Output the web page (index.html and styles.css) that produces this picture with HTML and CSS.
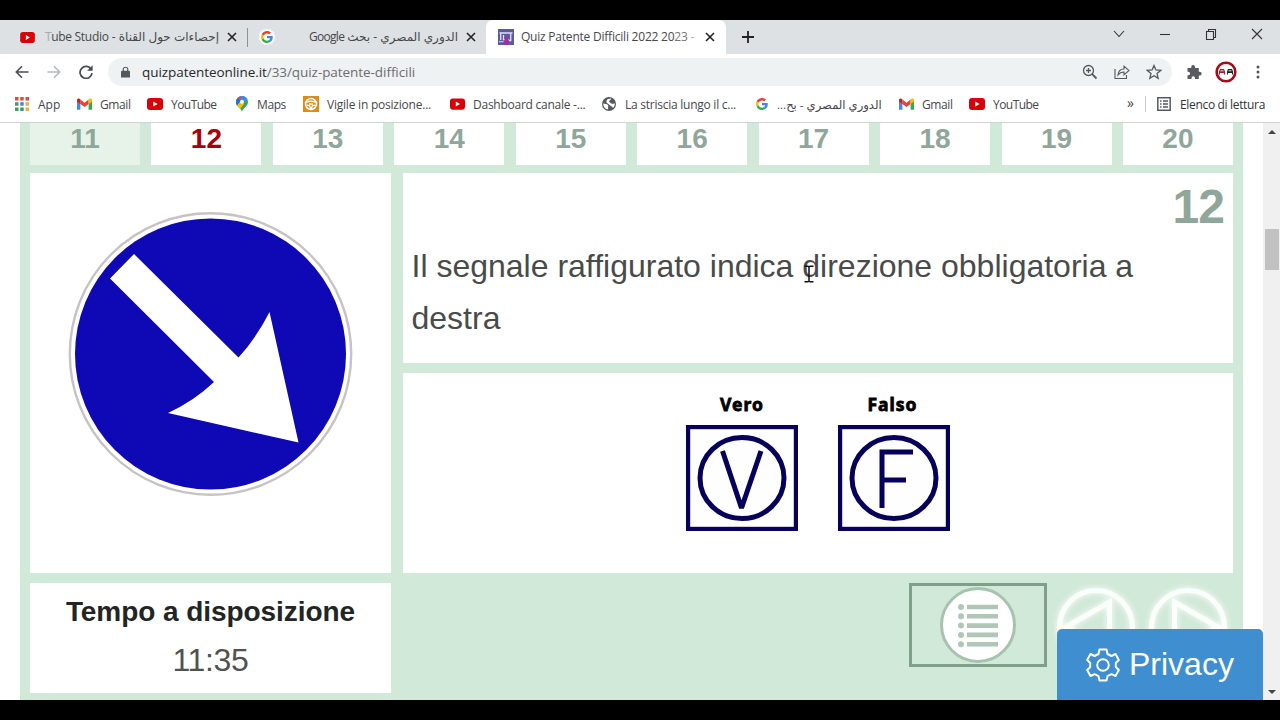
FILE: index.html
```html
<!DOCTYPE html>
<html lang="it">
<head>
<meta charset="utf-8">
<title>Quiz Patente Difficili 2022 2023</title>
<link rel="stylesheet" href="styles.css">
</head>
<body>
<svg class="defs" aria-hidden="true">
  <symbol id="yt" viewBox="0 0 16 12"><rect width="16" height="12" rx="3" fill="#d90008"/><path d="M6.2 3.4v5.2L10.6 6z" fill="#fff"/></symbol>
  <symbol id="google" viewBox="0 0 48 48"><path fill="#EA4335" d="M24 9.5c3.5 0 6.700 1.200 9.200 3.600l6.900-6.900C35.900 2.400 30.500 0 24 0 14.600 0 6.500 5.400 2.600 13.200l8 6.200C12.400 13.700 17.700 9.500 24 9.500z"/><path fill="#4285F4" d="M47 24.500c0-1.600-.2-3.100-.4-4.500H24v9h12.900c-.6 3-2.200 5.500-4.800 7.200l7.700 6C44.400 38 47 31.800 47 24.500z"/><path fill="#FBBC05" d="M10.500 28.600c-.5-1.500-.8-3-.8-4.600s.3-3.100.8-4.600l-8-6.200C1 16.500 0 20.100 0 24s.9 7.500 2.600 10.800z"/><path fill="#34A853" d="M24 48c6.500 0 11.900-2.100 15.900-5.800l-7.700-6c-2.200 1.500-4.900 2.300-8.200 2.300-6.300 0-11.600-4.200-13.500-9.900l-8 6.200C6.500 42.600 14.600 48 24 48z"/></symbol>
  <symbol id="gmail" viewBox="0 0 16 12"><path fill="#4285f4" d="M0 1.500V12h3.600V5z"/><path fill="#34a853" d="M16 1.500V12h-3.600V5z"/><path fill="#ea4335" d="M3.600 1.200 8 4.600l4.400-3.400v4.800L8 9.300 3.600 6z"/><path fill="#c5221f" d="M0 2.200C0 0 2.200-.4 3.600.9V6L0 3.400z"/><path fill="#fbbc04" d="M16 2.200c0-2.200-2.200-2.600-3.600-1.300V6L16 3.400z"/></symbol>
  <symbol id="x" viewBox="0 0 10 10"><path d="M1 1l8 8M9 1L1 9" stroke="#222" stroke-width="1.600"/></symbol>
</svg>
<div class="screen">
  <header class="browser">
    <div class="tabstrip">
      <div class="tab tab-one"><svg class="ic-yt"><use href="#yt"/></svg><span class="tab-title rtl t1" dir="rtl">إحصاءات حول القناة - <span class="latin"><span class="fade-start">T</span>ube Studio</span></span><svg class="ic-x"><use href="#x"/></svg></div>
      <div class="tab tab-two"><span class="g-disc"><svg class="ic-g"><use href="#google"/></svg></span><span class="tab-title rtl t2" dir="rtl">الدوري المصري - بحث <span class="latin">Google</span></span><svg class="ic-x"><use href="#x"/></svg></div>
      <div class="tab tab-active"><svg class="ic-quiz" viewBox="0 0 16 16"><path fill="#5c5a9c" d="M0 0h16v16H0z"/><path d="M1.500 4h13" stroke="#d7d8f1" stroke-width="1.600"/><path d="M2.700 4v7M12.700 4v7.500H11" stroke="#d7d8f1" stroke-width="1.400" fill="none"/><path d="M5.500 6v4.700h5" fill="none" stroke="#e6e5fa" stroke-width="1.300"/><path fill="#b3249b" d="M6.500 8.500h3.500V16H6.500z"/><path d="M1 12.700h4.500" stroke="#d9d9ef"/></svg><span class="tab-title t3">Quiz Patente Difficili 2022 20<span class="fade-a">23</span> <span class="fade-b">-</span></span><svg class="ic-x"><use href="#x"/></svg></div>
      <svg class="ic-plus" viewBox="0 0 12 12"><path d="M6 0v12M0 6h12" stroke="#222" stroke-width="1.800"/></svg>
      <div class="win-buttons">
        <svg width="12" height="12" viewBox="0 0 12 12"><path d="M1 3l5 5.500L11 3"/></svg>
        <svg width="12" height="12" viewBox="0 0 12 12"><path d="M1 6.500h10"/></svg>
        <svg width="12" height="12" viewBox="0 0 12 12"><path d="M1.500 3.500h7v8h-7zM3.500 3V1.500h7v8H9"/></svg>
        <svg width="12" height="12" viewBox="0 0 12 12"><path d="M1 1l10 10M11 1L1 11"/></svg>
      </div>
    </div>
    <div class="toolbar">
      <svg class="nav" viewBox="0 0 14 14"><path d="M13.500 7H1.500M7 1.300L1.300 7 7 12.700" stroke="#494c50"/></svg>
      <svg class="nav" viewBox="0 0 14 14"><path d="M.5 7h12M7 1.300L12.700 7 7 12.700" stroke="#b7babd"/></svg>
      <svg class="nav" viewBox="0 0 14 14"><path d="M12.300 4.500A6 6 0 1 0 13 8.200" stroke="#494c50" stroke-width="1.700"/><path d="M13.600.3v5.500H8.100z" fill="#494c50"/></svg>
      <div class="omnibox">
        <svg class="lock" viewBox="0 0 10 12"><path d="M1.200 4.500h7.600A1.200 1.200 0 0 1 10 5.700V12H0V5.700a1.200 1.200 0 0 1 1.200-1.200z" fill="#54585c"/><path d="M2.500 5V3a2.500 2.300 0 0 1 5 0v2" fill="none" stroke="#54585c" stroke-width="1.300"/></svg>
        <span class="url">quizpatenteonline.it<span class="path">/33/quiz-patente-difficili</span></span>
        <svg class="act" viewBox="0 0 16 16"><circle cx="6.500" cy="6.500" r="5"/><path d="M10.200 10.200l4.300 4.300" stroke-width="1.800"/><path d="M4 6.500h5M6.500 4v5"/></svg>
        <svg class="act" viewBox="0 0 16 16"><path d="M1 5v9.500h11.500V11M4 11c.4-4 2.600-6 6-6V2.200L15 6.500l-5 4.300V8C7.500 8 5.500 9 4 11z" stroke-width="1.100"/></svg>
        <svg class="act" viewBox="0 0 16 16"><path d="M8 1.500l1.900 4.500 4.800.4L11 9.600l1.200 4.700L8 11.800l-4.200 2.500L5 9.600 1.300 6.400 6.100 6z"/></svg>
      </div>
      <svg class="puzzle" viewBox="0 0 16 16"><path d="M1.500 4h3.700V3a1.900 1.900 0 0 1 3.800 0v1h3.800v3.800h.9a1.900 1.900 0 0 1 0 3.800h-.9V15H9v-1a1.700 1.700 0 0 0-3.500 0v1h-4v-3.700h.8a1.800 1.800 0 0 0 0-3.600h-.8z" fill="#575b5f"/></svg>
      <svg class="avatar" viewBox="0 0 22 22"><circle cx="11" cy="11" r="9.300" fill="#fff" stroke="#a60b16" stroke-width="2.600"/><path d="M4 10.500L5 8h4l1 2.500v3H9V12H5v1.500H4z" fill="#b31b2d"/><path d="M12 10.500l1-2.500h4l1 2.500v3h-1V12h-4v1.500h-1z" fill="#222"/><path d="M5.500 9.800h3M13.500 9.800h3" stroke="#ddd"/></svg>
      <svg class="dots" viewBox="0 0 4 14"><g fill="#54585c"><circle cx="2" cy="2" r="1.500"/><circle cx="2" cy="7" r="1.500"/><circle cx="2" cy="12" r="1.500"/></g></svg>
    </div>
    <nav class="bookmarks">
      <div class="bm b1"><svg width="14" height="14" viewBox="0 0 14 14"><path fill="#d94b45" d="M0 0h3.500v3.500H0zM5.200 0h3.500v3.500H5.200zM10.500 0H14v3.500h-3.500z"/><path fill="#479b63" d="M0 5.200h3.500v3.500H0zM0 10.500h3.500V14H0z"/><path fill="#4485dd" d="M5.200 5.200h3.500v3.500H5.200z"/><path fill="#e6b43c" d="M10.500 5.200H14v3.500h-3.500zM10.500 10.500H14V14h-3.500z"/><path fill="#39986d" d="M5.200 10.500h3.500V14H5.200z"/></svg><span>App</span></div>
      <div class="bm b2"><svg width="15" height="12"><use href="#gmail"/></svg><span>Gmail</span></div>
      <div class="bm b3"><svg width="16" height="12"><use href="#yt"/></svg><span>YouTube</span></div>
      <div class="bm b4"><svg width="12" height="16" viewBox="0 0 12 16"><path fill="#34a853" d="M6 16C5.400 12 0 10.500 0 6a6 6 0 0 1 12 0c0 4.500-5.400 6-6 10z"/><path fill="#ea4335" d="M6 6L1.500 2A6 6 0 0 1 6 0z"/><path fill="#4285f4" d="M5 0a6 6 0 0 1 6.500 3.600L6 7 4 4z"/><path fill="#1a73e8" d="M1.500 2L5 5 1 9.500A6 6 0 0 1 1.500 2z"/><path fill="#fbbc04" d="M1 9.500L5 5l3 3-4 5z"/><circle cx="6" cy="5.700" r="2" fill="#fff"/></svg><span>Maps</span></div>
      <div class="bm b5"><svg width="16" height="16" viewBox="0 0 16 16"><path fill="#df8c17" d="M0 0h16v16H0z"/><circle cx="8" cy="8" r="5.500" fill="none" stroke="#fff" stroke-width="1.500"/><path d="M3 6.500c3-1.500 7-1.500 10 0M3.500 9.200l3 .3L8 13l1.500-3.500 3-.3M6 8h4" fill="none" stroke="#fff" stroke-width="1.300"/></svg><span>Vigile in posizione...</span></div>
      <div class="bm b6"><svg width="15" height="12"><use href="#yt"/></svg><span>Dashboard canale -...</span></div>
      <div class="bm b7"><svg width="14" height="14" viewBox="0 0 14 14"><circle cx="7" cy="7" r="7" fill="#55595d"/><path d="M1.300 6.500C3 7 5 6.500 6 8.200c.8 1.500-.5 2 .2 4.200C3.500 12.300 1.300 10 1.300 6.500zM5 2.500c1.500 0 2.500-1.300 4-.8 0 1.500-2 1.600-2 2.800 1.500.8 1.500 2.500 3.500 2.300.8 0 1.500 0 2.200-.5.200 1.800-.4 3.600-1.700 4.800C10.500 9.500 9 9.500 8 8.300 7 7 5 6.500 4.300 5.200z" fill="#fff"/></svg><span>La striscia lungo il c...</span></div>
      <div class="bm b8"><svg width="12" height="12"><use href="#google"/></svg><span dir="rtl">الدوري المصري - بح...</span></div>
      <div class="bm b9"><svg width="15" height="12"><use href="#gmail"/></svg><span>Gmail</span></div>
      <div class="bm b10"><svg width="16" height="12"><use href="#yt"/></svg><span>YouTube</span></div>
      <div class="more">»</div>
      <div class="reading"><svg width="14" height="14" viewBox="0 0 14 14"><path d="M.8.8h12.400v12.400H.8z" fill="none" stroke="#55595d" stroke-width="1.500"/><path d="M3 4h1.500M3 7h1.500M3 10h1.500M6 4h5M6 7h5M6 10h5" stroke="#55595d" stroke-width="1.300"/></svg><span>Elenco di lettura</span></div>
    </nav>
  </header>
  <main class="viewport">
    <section class="quiz">
      <div class="numbers"><b class="done">11</b><b class="current">12</b><b>13</b><b>14</b><b>15</b><b>16</b><b>17</b><b>18</b><b>19</b><b>20</b></div>
      <div class="board">
        <div class="left">
          <div class="sign"><svg width="286" height="286" viewBox="0 0 286 286"><circle cx="143.500" cy="143" r="140.700" fill="#fff" stroke="#c7c3c5" stroke-width="2.400"/><circle cx="143.500" cy="143" r="135.500" fill="#0e08b5"/><path d="M67 43L171.500 146.500Q190 126 202.500 101L231.500 231.500 101 202Q127 190 147 171L43 67.500z" fill="#fff"/></svg></div>
          <div class="timer"><strong>Tempo a disposizione</strong><span>11:35</span></div>
        </div>
        <div class="right">
          <div class="question"><div class="qnum">12</div><p>Il segnale raffigurato indica direzione obbligatoria a destra</p></div>
          <div class="answers">
            <div class="answer"><span>Vero</span><svg width="112" height="106" viewBox="0 0 112 106"><rect x="2" y="2" width="108" height="102" fill="#fdfefd" stroke="#06005a" stroke-width="4.400"/><ellipse cx="56" cy="53" rx="42" ry="40.500"/><path d="M36.500 26L55.500 83 75 26" stroke-linejoin="bevel"/></svg></div>
            <div class="answer"><span>Falso</span><svg width="112" height="106" viewBox="0 0 112 106"><rect x="2" y="2" width="108" height="102" fill="#fdfefd" stroke="#06005a" stroke-width="4.400"/><ellipse cx="56" cy="53" rx="42" ry="40.500"/><path d="M75 27H44v56M44 55h24"/></svg></div>
          </div>
          <div class="controls">
            <div class="list-button"><svg width="78" height="78" viewBox="0 0 78 78"><circle cx="39" cy="39" r="36.500" fill="#fff" stroke="#a9c2b0" stroke-width="3"/><path d="M28 21h31M28 30.300h31M28 39.600h31M28 48.900h31M28 58.200h31" stroke="#b0c6b6" stroke-width="4.600"/><path d="M22 21h0M22 30.300h0M22 39.600h0M22 48.900h0M22 58.200h0" stroke="#b0c6b6" stroke-width="6" stroke-linecap="round"/></svg></div>
            <svg class="arrow" width="82" height="82" viewBox="0 0 82 82"><circle cx="41" cy="41" r="36.500"/><path d="M54.500 16v50L11 41z"/></svg>
            <svg class="arrow" width="82" height="82" viewBox="0 0 82 82"><circle cx="41" cy="41" r="36.500"/><path d="M27.500 16v50l43.500-25z"/></svg>
          </div>
        </div>
      </div>
    </section>
    <aside class="scrollbar"><i class="up"></i><i class="thumb"></i><i class="down"></i></aside>
    <div class="privacy"><svg width="34" height="34" viewBox="0 0 34 34"><path d="M13.500 1.500h7l1 4.500 4 2 4-2 3.300 6-3 3v4l3 3-3.300 6-4-1.800-4 2-1 4.300h-7l-1-4.300-4-2-4 1.800-3.300-6 3-3v-4l-3-3 3.300-6 4 2 4-2z"/><circle cx="17" cy="17" r="5.800"/></svg><span>Privacy</span></div>
    <svg class="cursor" width="10" height="18" viewBox="0 0 10 18"><path d="M.5 1.200H4l1 .8 1-.8h3.500M5 2v14M.5 16.800H4l1-.8 1 .8h3.500" fill="none" stroke="#111" stroke-width="1.500"/></svg>
  </main>
</div>
</body>
</html>
```

FILE: styles.css
```css
* { box-sizing: border-box; }
body { margin: 0; background: #000; font-family: "Liberation Sans", Arial, sans-serif; }
svg { display: block; flex: none; }
.defs { width: 0; height: 0; position: absolute; }
.screen { width: 1280px; height: 720px; padding: 20px 0; overflow: hidden; }
.browser { height: 103px; background: #fff; border-bottom: 1px solid #d2d4d4; font-family: "Open Sans", "Noto Sans", "DejaVu Sans", sans-serif; color: #45484b; }
.tabstrip { display: flex; height: 34px; background: #dde1e3; }
.tab { display: flex; align-items: center; height: 34px; white-space: nowrap; }
.tab-title { flex: none; font-size: 12px; line-height: 18px; }
.rtl { font-size: 12px; }
.latin { letter-spacing: -.3px; }
.tab-one { width: 248px; padding-left: 20px; }
.tab-one::after { content: ""; margin-left: 10px; height: 19px; width: 1px; background: #8d9295; }
.tab-two { width: 238px; padding-left: 11px; }
.t2 .latin { letter-spacing: -.7px; }
.tab-active { width: 240px; padding-left: 12px; background: #fff; border-radius: 7px 7px 0 0; }
.ic-yt { width: 15px; height: 11px; }
.ic-x { width: 10px; height: 10px; }
.t1 { width: 173px; margin: 0 8px 0 11px; }
.t2 { width: 150px; margin: 0 8px 0 33px; }
.t3 { width: 173px; margin: 0 11px 0 7px; letter-spacing: -.22px; }
.fade-start, .fade-b { color: #aaa; }
.fade-a { color: #777; }
.g-disc { width: 16px; height: 16px; border-radius: 50%; background: #fff; display: flex; align-items: center; justify-content: center; }
.ic-g { width: 12px; height: 12px; }
.ic-quiz { width: 16px; height: 16px; }
.ic-plus { width: 12px; height: 12px; margin: 11px 0 0 16px; }
.win-buttons { display: flex; gap: 34px; margin: 8px 17px 0 auto; }
.win-buttons svg { fill: none; stroke: #333; stroke-width: 1.1; }
.toolbar { height: 36px; display: flex; align-items: center; padding-left: 15px; }
.nav { width: 14px; height: 14px; margin-right: 18px; fill: none; stroke-width: 1.6; }
.omnibox { display: flex; align-items: center; width: 1064px; height: 28px; margin-left: -3px; padding-left: 13px; border-radius: 14px; background: #eff2f3; }
.lock { width: 9px; height: 12px; }
.url { width: 935px; flex: none; margin: 0 5px 0 12px; font-size: 13.5px; letter-spacing: -.06px; color: #27292b; }
.path { color: #6b6e71; }
.act { width: 16px; height: 16px; margin-right: 16px; fill: none; stroke: #54585c; stroke-width: 1.3; }
.act:last-child { margin-right: 0; }
.puzzle { width: 16px; height: 16px; margin-left: 14px; }
.avatar { width: 22px; height: 22px; margin-left: 13px; }
.dots { width: 4px; height: 14px; margin-left: 19px; }
.bookmarks { display: flex; align-items: center; height: 28px; padding-left: 15px; font-size: 12px; white-space: nowrap; }
.bm { display: flex; align-items: center; flex: none; }
.bm span { letter-spacing: -.22px; }
.b1 { width: 62px; gap: 9px; }
.b1 span { letter-spacing: 0; }
.b2 { width: 70px; gap: 8px; }
.b2 span, .b9 span { letter-spacing: -.4px; }
.b3 { width: 89px; gap: 8px; }
.b3 span, .b10 span { letter-spacing: -.55px; }
.b4 { width: 67px; gap: 9px; }
.b4 span { letter-spacing: -.4px; }
.b5 { width: 147px; gap: 8px; }
.b6 { width: 152px; gap: 8px; }
.b6 span, .b7 span { letter-spacing: -.25px; }
.b7 { width: 154px; gap: 9px; }
.b8 { width: 143px; gap: 9px; }
.b8 span { font-size: 11.6px; letter-spacing: 0; }
.b9 { width: 70px; gap: 8px; }
.b10 { width: 158px; gap: 8px; }
.more { width: 18px; font-size: 14px; line-height: 16px; margin-top: -3px; }
.reading { display: flex; align-items: center; gap: 9px; height: 16px; padding-left: 11px; border-left: 1px solid #ccc; letter-spacing: -.33px; color: #303336; }
.viewport { position: relative; display: flex; height: 577px; background: #fff; overflow: hidden; }
.quiz { width: 1223px; margin-left: 20px; padding: 0 10px; background: #d1e9d8; }
.numbers { display: grid; grid-template-columns: repeat(10, 110px); justify-content: space-between; height: 42px; }
.numbers b { background: #fff; color: #8fa69a; font-size: 28px; line-height: 31px; text-align: center; }
.numbers .done { background: #e7f3e9; }
.numbers .current { color: #a80006; }
.board { display: flex; gap: 12px; margin-top: 8px; }
.left { width: 361px; }
.sign { height: 400px; padding: 38px 0 0 37px; background: #fff; }
.timer { height: 110px; margin-top: 10px; padding-top: 10px; background: #fff; display: flex; flex-direction: column; align-items: center; }
.timer strong { font-size: 28px; line-height: 38px; color: #222523; letter-spacing: -.06px; }
.timer span { font-size: 32px; line-height: 59px; color: #505250; letter-spacing: -.3px; }
.right { width: 830px; }
.question { height: 190px; padding: 6px 9px 0 8.5px; background: #fff; color: #494b49; }
.qnum { height: 61px; text-align: right; font-size: 48px; line-height: 56px; font-weight: bold; color: #8fa69a; letter-spacing: -1px; }
.question p { margin: 0; font-size: 32px; line-height: 52px; }
.answers { display: flex; justify-content: center; gap: 40px; height: 200px; margin-top: 10px; padding-top: 20px; background: #fff; }
.answer { width: 112px; }
.answer > span { display: block; height: 32px; text-align: center; font: bold 17.5px/23px "Noto Sans", sans-serif; letter-spacing: 1px; color: #000; -webkit-text-stroke: .8px #000; }
.answer:last-child > span { padding-right: 3px; }
.answer svg { fill: none; stroke: #06005a; stroke-width: 5; }
.controls { display: flex; justify-content: flex-end; margin-top: 10px; padding-right: 4px; }
.list-button { width: 138px; height: 84px; margin-right: 8px; border: 3px solid #7f9f88; display: flex; justify-content: center; }
.arrow { margin-top: 3px; margin-right: 10px; fill: none; stroke: #fafffb; stroke-width: 5; filter: drop-shadow(0 0 3px #fff); }
.arrow:last-child { margin-right: 0; }
.scrollbar { display: flex; flex-direction: column; align-items: center; width: 17px; margin-left: 20px; background: #f0f0f0; }
.up { margin-top: 7px; border: 4px solid transparent; border-top: 0; border-bottom-color: #444; }
.thumb { width: 14px; height: 41px; margin-top: 95px; background: #c1c1c1; }
.down { margin: auto 0 6px; border: 4px solid transparent; border-bottom: 0; border-top-color: #444; }
.privacy { position: absolute; right: 17px; bottom: 0; width: 206px; height: 71px; padding-left: 29px; display: flex; align-items: center; gap: 9px; border-radius: 5px 5px 0 0; background: #3e8ed0; color: #fff; font-size: 32px; }
.privacy svg { fill: none; stroke: #fff; stroke-width: 2; stroke-linejoin: round; }
.cursor { position: absolute; left: 804px; top: 142px; }
```
